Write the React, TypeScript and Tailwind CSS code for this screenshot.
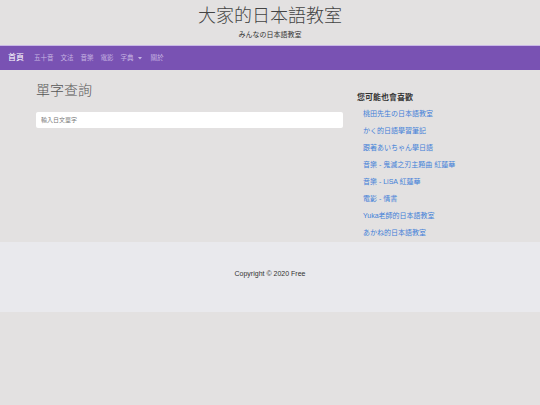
const links = [
  '桃田先生の日本語教室',
  'かく的日語學習筆記',
  '跟著あいちゃん學日語',
  '音樂 - 鬼滅之刃主題曲 紅蓮華',
  '音樂 - LiSA 紅蓮華',
  '電影 - 情書',
  'Yuka老師的日本語教室',
  'あかね的日本語教室',
];

const navItems = ['五十音', '文法', '音樂', '電影'];

export default function App() {
  return (
    <div
      className="min-h-screen bg-[#e3e1e1] text-[#333]"
      style={{ fontFamily: '"Liberation Sans", "Noto Sans CJK TC", sans-serif' }}
    >
      <header className="flex flex-col items-center pt-[5px] h-[45px]">
        <h1 className="text-[18px] leading-[22px] font-light text-[#444]">大家的日本語教室</h1>
        <p className="text-[7px] leading-[10px] mt-[3px] text-[#333]">みんなの日本語教室</p>
      </header>

      <nav className="h-[25px] bg-[#7952b3] border-t border-[#c9b8e6] flex items-center px-[8px] gap-[10px]">
        <span className="text-[8px] text-white">首頁</span>
        <div className="flex items-center gap-[7px] text-[6.5px] text-[#c6b4e2]">
          {navItems.map((n) => (
            <span key={n}>{n}</span>
          ))}
          <span className="flex items-center gap-[4px]">
            字典
            <svg width="4" height="3" viewBox="0 0 4 3">
              <path d="M0 0h4L2 2.5z" fill="#c6b4e2" />
            </svg>
          </span>
          <span className="ml-[2px]">關於</span>
        </div>
      </nav>

      <main className="h-[172px] flex gap-[14px] pl-[36px]">
        <section className="w-[307px] pt-[10px]">
          <h2 className="text-[14px] leading-[20px] font-light text-[#555]">單字查詢</h2>
          <input
            className="mt-[12px] w-full h-[16px] bg-white rounded-[2px] px-[5px] text-[6px] outline-none placeholder:text-[#777]"
            placeholder="輸入日文單字"
          />
        </section>
        <aside className="pt-[23px]">
          <h3 className="text-[8px] font-bold leading-[10px] text-[#333]">您可能也會喜歡</h3>
          <ul className="mt-[6px] pl-[6px] flex flex-col gap-[7px]">
            {links.map((l) => (
              <li key={l} className="text-[7px] leading-[10px] text-[#3f7fd8]">
                {l}
              </li>
            ))}
          </ul>
        </aside>
      </main>

      <footer className="h-[70px] bg-[#e9e9ed] flex items-center justify-center">
        <p className="text-[7px] text-[#333] -mt-[6px]">Copyright © 2020 Free</p>
      </footer>
    </div>
  );
}
